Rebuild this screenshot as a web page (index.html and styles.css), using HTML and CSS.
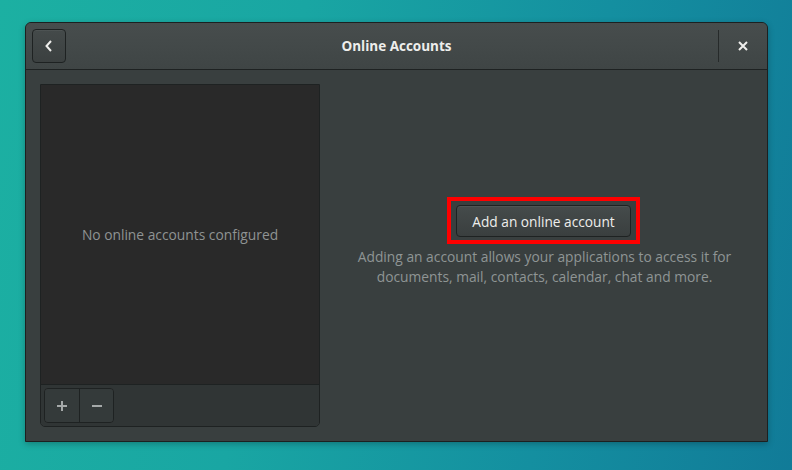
FILE: index.html
```html
<!DOCTYPE html>
<html>
<head>
<meta charset="utf-8">
<link rel="stylesheet" href="styles.css">
</head>
<body>
<div class="desktop">
  <div class="window">
    <header class="headerbar">
      <button class="back-btn" aria-label="Back">
        <svg width="16" height="16" viewBox="0 0 16 16"><path d="M10 3 L5.5 8 L10 13" fill="none" stroke="#eeeeec" stroke-width="2"/></svg>
      </button>
      <div class="title">Online Accounts</div>
      <div class="hsep"></div>
      <button class="close-btn" aria-label="Close">
        <svg width="12" height="12" viewBox="0 0 12 12"><path d="M2 2 L10 10 M10 2 L2 10" fill="none" stroke="#eeeeec" stroke-width="2"/></svg>
      </button>
    </header>
    <div class="content">
      <div class="sidebar">
        <div class="list">
          <span class="empty">No online accounts configured</span>
        </div>
        <div class="toolbar">
          <div class="linked">
            <button class="tbtn" aria-label="Add">
              <svg width="12" height="12" viewBox="0 0 12 12"><path d="M6 1 V11 M1 6 H11" stroke="#a5a9a9" stroke-width="2"/></svg>
            </button>
            <button class="tbtn" aria-label="Remove">
              <svg width="12" height="12" viewBox="0 0 12 12"><path d="M1 6 H11" stroke="#a5a9a9" stroke-width="2"/></svg>
            </button>
          </div>
        </div>
      </div>
      <div class="main">
        <div class="highlight">
          <button class="add-btn">Add an online account</button>
        </div>
        <p class="desc">Adding an account allows your applications to access it for<br>documents, mail, contacts, calendar, chat and more.</p>
      </div>
    </div>
  </div>
</div>
</body>
</html>
```
FILE: styles.css
```css
* { box-sizing: border-box; }
html, body { margin: 0; padding: 0; }
body {
  width: 792px;
  height: 470px;
  overflow: hidden;
  font-family: "Open Sans", "DejaVu Sans", sans-serif;
}
.desktop {
  width: 792px;
  height: 470px;
  background: linear-gradient(100deg, #1cb0a2 0%, #19a6a3 35%, #148fa0 70%, #117b98 100%);
  padding: 22px 25px 0 25px;
}
.window {
  width: 743px;
  height: 420px;
  border: 1px solid #1c2020;
  border-radius: 6px 6px 0 0;
  background: #393f3f;
  display: flex;
  flex-direction: column;
  box-shadow: 0 2px 6px rgba(0,0,0,0.25);
  overflow: hidden;
}
.headerbar {
  height: 47px;
  flex: none;
  display: flex;
  align-items: center;
  padding: 0 6px 0 6px;
  background: linear-gradient(#474d4d, #3f4545);
  border-bottom: 1px solid #1e2222;
  position: relative;
}
.back-btn {
  width: 34px;
  height: 34px;
  border: 1px solid #1e2222;
  border-radius: 4px;
  background: linear-gradient(#444a4a, #3b4040);
  box-shadow: inset 0 1px rgba(255,255,255,0.05);
  display: flex;
  align-items: center;
  justify-content: center;
  padding: 0;
}
.title {
  position: absolute;
  left: 0;
  right: 0;
  text-align: center;
  font-weight: bold;
  font-size: 13.5px;
  color: #eeeeec;
  pointer-events: none;
  top: 14px;
}
.hsep {
  margin-left: auto;
  width: 1px;
  height: 32px;
  background: #262a2a;
  margin-right: 15px;
}
.close-btn {
  width: 18px;
  height: 18px;
  border: none;
  background: none;
  padding: 0;
  display: flex;
  align-items: center;
  justify-content: center;
  margin-right: 9px;
}
.content {
  flex: 1;
  display: flex;
  padding: 14px 0 14px 14px;
}
.sidebar {
  width: 280px;
  height: 343px;
  border: 1px solid #1e2222;
  border-radius: 0 0 5px 5px;
  display: flex;
  flex-direction: column;
  overflow: hidden;
}
.list {
  flex: 1;
  background: #292929;
  display: flex;
  align-items: center;
  justify-content: center;
  border-bottom: 1px solid #1e2222;
}
.empty {
  color: #8f9393;
  font-size: 13.8px;
}
.toolbar {
  height: 41px;
  flex: none;
  background: #303535;
  padding: 3px 3px 0 3px;
}
.linked {
  display: inline-flex;
  border: 1px solid #1e2222;
  border-radius: 4px;
  overflow: hidden;
  height: 35px;
}
.tbtn {
  width: 34px;
  height: 33px;
  border: none;
  padding: 0;
  background: #343a3a;
  display: flex;
  align-items: center;
  justify-content: center;
}
.tbtn + .tbtn { border-left: 1px solid #1e2222; }
.main {
  flex: 1;
  display: flex;
  flex-direction: column;
  align-items: center;
  padding-top: 113px;
  padding-right: 2px;
}
.highlight {
  border: 4px solid #ff0000;
  padding: 4px 5px 3px 5px;
  margin-left: 2px;
}
.add-btn {
  width: 175px;
  height: 32px;
  border: 1px solid #1e2222;
  border-radius: 4px;
  background: linear-gradient(#454b4b, #3a3f3f);
  box-shadow: inset 0 1px rgba(255,255,255,0.06);
  color: #eeeeec;
  font-family: "Open Sans", "DejaVu Sans", sans-serif;
  font-size: 13.7px;
  padding: 0;
}
.desc {
  margin: 3px 0 0 4px;
  text-align: center;
  color: #8f9595;
  font-size: 13.8px;
  line-height: 20px;
}
```
